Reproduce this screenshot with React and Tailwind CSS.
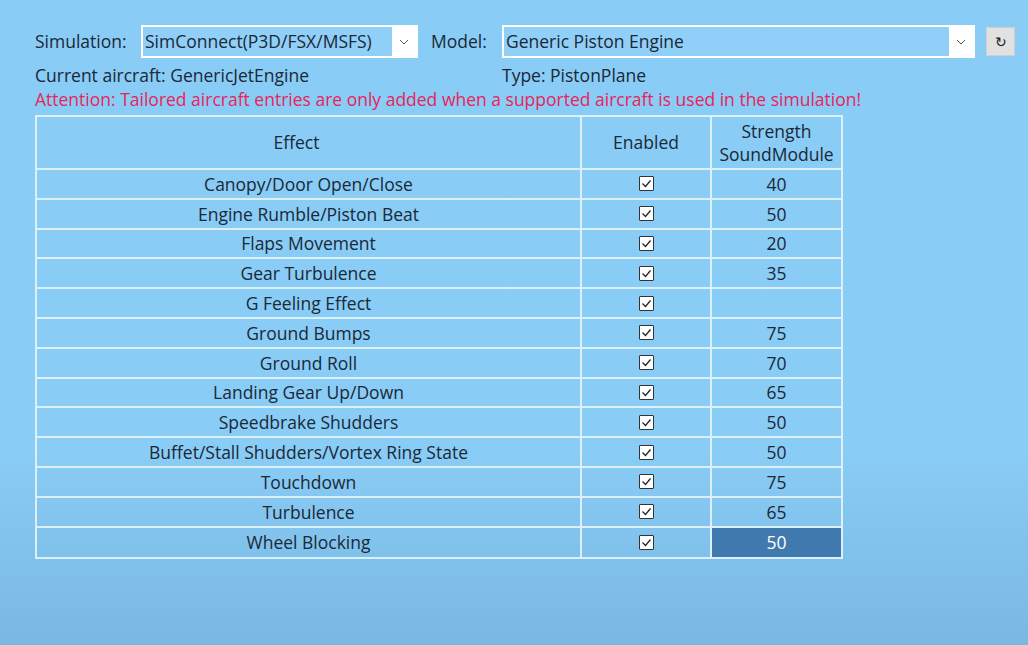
import { useState } from 'react';

const rows = [
  ['Canopy/Door Open/Close', '40'],
  ['Engine Rumble/Piston Beat', '50'],
  ['Flaps Movement', '20'],
  ['Gear Turbulence', '35'],
  ['G Feeling Effect', ''],
  ['Ground Bumps', '75'],
  ['Ground Roll', '70'],
  ['Landing Gear Up/Down', '65'],
  ['Speedbrake Shudders', '50'],
  ['Buffet/Stall Shudders/Vortex Ring State', '50'],
  ['Touchdown', '75'],
  ['Turbulence', '65'],
  ['Wheel Blocking', '50'],
];

function Check() {
  return (
    <span className="inline-flex h-[15px] w-[15px] items-center justify-center rounded-[1px] border border-[#333] bg-white">
      <svg width="11" height="11" viewBox="0 0 11 11">
        <path d="M1.5 5.5 L4.5 8.5 L9.5 2.5" fill="none" stroke="#222" strokeWidth="1.2" />
      </svg>
    </span>
  );
}

function Select({ value, width }) {
  return (
    <div className={`flex h-[33px] shrink-0 items-center border-2 border-white bg-white ${width}`}>
      <div className="flex h-full flex-1 items-center bg-[#90cff8] pl-[2px] text-[17.5px]">{value}</div>
      <div className="flex w-[24px] items-center justify-center">
        <svg width="10" height="6" viewBox="0 0 10 6">
          <path d="M1 1 L5 5 L9 1" fill="none" stroke="#555" strokeWidth="1" />
        </svg>
      </div>
    </div>
  );
}

export default function App() {
  const [selected] = useState(12);

  return (
    <div className="h-[645px] w-[1028px] bg-gradient-to-b from-[#89ccf6] from-70% to-[#79b8e2] text-[#1b2836]"
      style={{ fontFamily: '"Open Sans", "Noto Sans", sans-serif' }}>
      <div className="flex flex-col pl-[35px] pr-[10px] pt-[25px]">
        <div className="flex items-center">
          <span className="w-[106px] shrink-0 text-[17.5px]">Simulation:</span>
          <Select value="SimConnect(P3D/FSX/MSFS)" width="w-[277px]" />
          <span className="ml-[13px] w-[71px] shrink-0 text-[17.5px]">Model:</span>
          <Select value="Generic Piston Engine" width="w-[473px]" />
          <button className="ml-[11px] flex h-[29px] w-[29px] shrink-0 items-center justify-center border border-[#cfcfcf] bg-[#e1e1e1] text-[14px] text-[#222]">↻</button>
        </div>
        <div className="mt-[5px] flex text-[17.5px] leading-[24px]">
          <span className="w-[467px]">Current aircraft: GenericJetEngine</span>
          <span>Type: PistonPlane</span>
        </div>
        <div className="text-[17.5px] leading-[25px] text-[#e8245a]">
          Attention: Tailored aircraft entries are only added when a supported aircraft is used in the simulation!
        </div>
        <div className="mt-[3px] w-[808px] border-2 border-[#dcf0fc] text-[17.5px]">
          <div className="grid h-[53px] grid-cols-[545px_130px_129px] border-b-2 border-[#dcf0fc]">
            <div className="flex items-center justify-center border-r-2 border-[#dcf0fc] pr-[24px]">Effect</div>
            <div className="flex items-center justify-center border-r-2 border-[#dcf0fc]">Enabled</div>
            <div className="flex flex-col items-center justify-center leading-[23px]">
              <span>Strength</span>
              <span>SoundModule</span>
            </div>
          </div>
          {rows.map(([name, val], i) => (
            <div key={name}
              className={`grid h-[29.8px] grid-cols-[545px_130px_129px] ${i < rows.length - 1 ? 'border-b-2 border-[#dcf0fc]' : ''}`}>
              <div className="flex items-center justify-center border-r-2 border-[#dcf0fc]">{name}</div>
              <div className="flex items-center justify-center border-r-2 border-[#dcf0fc]"><Check /></div>
              <div className={`flex items-center justify-center ${i === selected ? 'bg-[#4079ad] text-white' : ''}`}>{val}</div>
            </div>
          ))}
        </div>
      </div>
    </div>
  );
}
